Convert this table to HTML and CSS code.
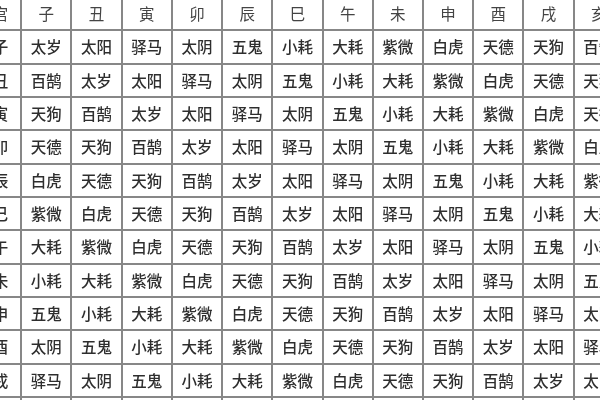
FILE: index.html
```html
<!DOCTYPE html>
<html lang="zh">
<head>
<meta charset="utf-8">
<title>太岁神煞表</title>
<link rel="stylesheet" href="styles.css">
</head>
<body>
<table class="grid">
<thead>
<tr><th class="key">宫</th><th>子</th><th>丑</th><th>寅</th><th>卯</th><th>辰</th><th>巳</th><th>午</th><th>未</th><th>申</th><th>酉</th><th>戌</th><th>亥</th></tr>
</thead>
<tbody>
<tr><td class="key">子</td><td>太岁</td><td>太阳</td><td>驿马</td><td>太阴</td><td>五鬼</td><td>小耗</td><td>大耗</td><td>紫微</td><td>白虎</td><td>天德</td><td>天狗</td><td>百鹄</td></tr>
<tr><td class="key">丑</td><td>百鹄</td><td>太岁</td><td>太阳</td><td>驿马</td><td>太阴</td><td>五鬼</td><td>小耗</td><td>大耗</td><td>紫微</td><td>白虎</td><td>天德</td><td>天狗</td></tr>
<tr><td class="key">寅</td><td>天狗</td><td>百鹄</td><td>太岁</td><td>太阳</td><td>驿马</td><td>太阴</td><td>五鬼</td><td>小耗</td><td>大耗</td><td>紫微</td><td>白虎</td><td>天德</td></tr>
<tr><td class="key">卯</td><td>天德</td><td>天狗</td><td>百鹄</td><td>太岁</td><td>太阳</td><td>驿马</td><td>太阴</td><td>五鬼</td><td>小耗</td><td>大耗</td><td>紫微</td><td>白虎</td></tr>
<tr><td class="key">辰</td><td>白虎</td><td>天德</td><td>天狗</td><td>百鹄</td><td>太岁</td><td>太阳</td><td>驿马</td><td>太阴</td><td>五鬼</td><td>小耗</td><td>大耗</td><td>紫微</td></tr>
<tr><td class="key">巳</td><td>紫微</td><td>白虎</td><td>天德</td><td>天狗</td><td>百鹄</td><td>太岁</td><td>太阳</td><td>驿马</td><td>太阴</td><td>五鬼</td><td>小耗</td><td>大耗</td></tr>
<tr><td class="key">午</td><td>大耗</td><td>紫微</td><td>白虎</td><td>天德</td><td>天狗</td><td>百鹄</td><td>太岁</td><td>太阳</td><td>驿马</td><td>太阴</td><td>五鬼</td><td>小耗</td></tr>
<tr><td class="key">未</td><td>小耗</td><td>大耗</td><td>紫微</td><td>白虎</td><td>天德</td><td>天狗</td><td>百鹄</td><td>太岁</td><td>太阳</td><td>驿马</td><td>太阴</td><td>五鬼</td></tr>
<tr><td class="key">申</td><td>五鬼</td><td>小耗</td><td>大耗</td><td>紫微</td><td>白虎</td><td>天德</td><td>天狗</td><td>百鹄</td><td>太岁</td><td>太阳</td><td>驿马</td><td>太阴</td></tr>
<tr><td class="key">酉</td><td>太阴</td><td>五鬼</td><td>小耗</td><td>大耗</td><td>紫微</td><td>白虎</td><td>天德</td><td>天狗</td><td>百鹄</td><td>太岁</td><td>太阳</td><td>驿马</td></tr>
<tr><td class="key">戌</td><td>驿马</td><td>太阴</td><td>五鬼</td><td>小耗</td><td>大耗</td><td>紫微</td><td>白虎</td><td>天德</td><td>天狗</td><td>百鹄</td><td>太岁</td><td>太阳</td></tr>
<tr><td class="key">亥</td><td>太阳</td><td>驿马</td><td>太阴</td><td>五鬼</td><td>小耗</td><td>大耗</td><td>紫微</td><td>白虎</td><td>天德</td><td>天狗</td><td>百鹄</td><td>太岁</td></tr>
</tbody>
</table>
</body>
</html>
```

FILE: styles.css
```css
html, body {
  margin: 0;
  padding: 0;
  background: #ffffff;
  width: 600px;
  height: 400px;
  overflow: hidden;
}

.grid {
  border-collapse: collapse;
  table-layout: fixed;
  width: 655px;
  margin: -4px 0 0 -30px;
  font-family: "Noto Sans CJK SC", "Noto Sans", sans-serif;
  font-size: 15.5px;
  font-weight: 500;
  color: #2e2e2e;
  filter: blur(0.6px);
}

.grid th,
.grid td {
  border: 2px solid #878787;
  height: 33.33px;
  padding: 0;
  text-align: center;
  vertical-align: middle;
  line-height: 1;
  box-sizing: border-box;
}

.grid th {
  font-weight: normal;
  color: #444444;
}

.grid .key {
  padding-left: 9px;
}
```
